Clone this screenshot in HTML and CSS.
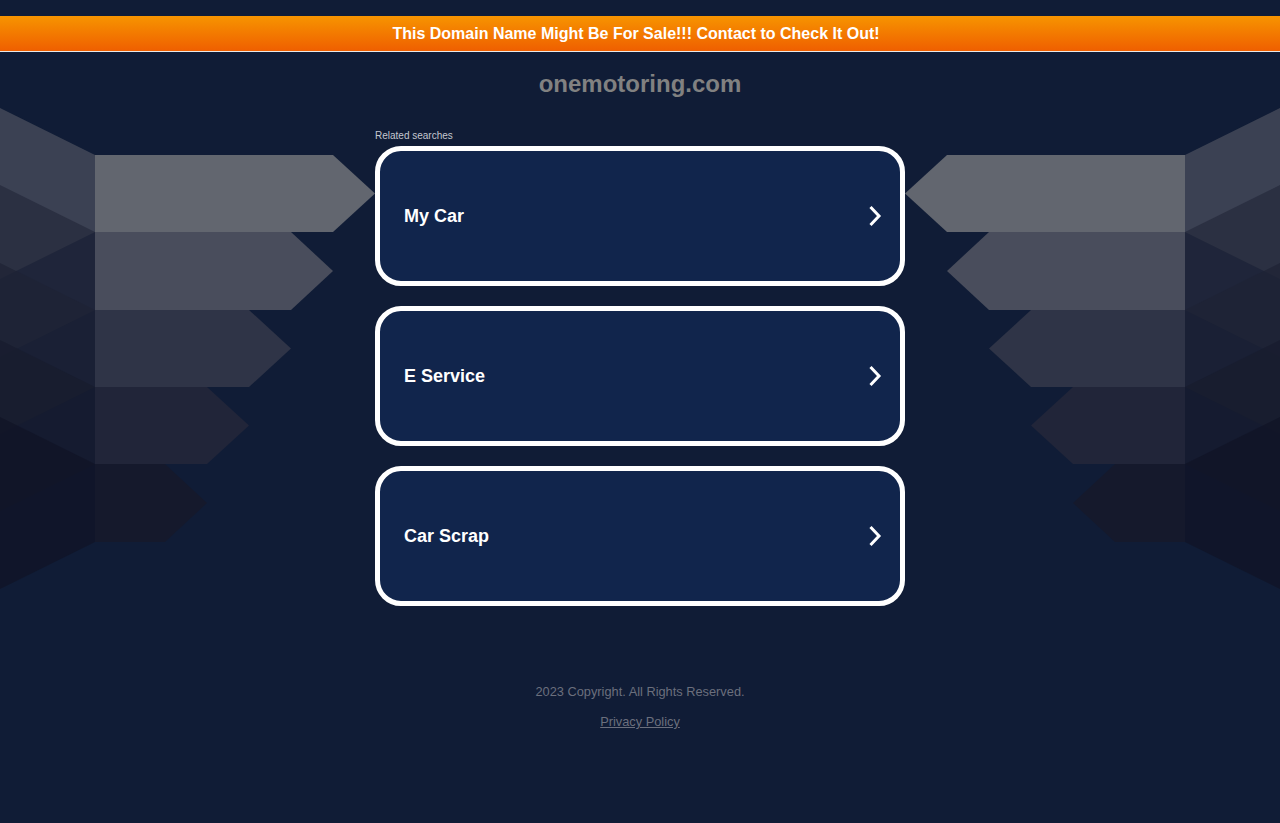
FILE: index.html
```html
<!DOCTYPE html>
<html lang="en">
<head>
<meta charset="utf-8">
<title>onemotoring.com</title>
<link rel="stylesheet" href="styles.css">
</head>
<body>
<div class="banner">This Domain Name Might Be For Sale!!! Contact to Check It Out!</div>
<h1 class="domain">onemotoring.com</h1>
<div class="stage">
  <div class="wing">
    <svg class="wing-svg" width="375" height="490" viewBox="0 0 375 490">
      <g class="faces">
        <polygon points="0,8 95,55 95,132 0,179" fill="#4c505e"/>
        <polygon points="0,85 95,132 95,210 0,257" fill="#262a3b"/>
        <polygon points="0,163 95,210 95,287 0,334" fill="#1f2334"/>
        <polygon points="0,240 95,287 95,364 0,411" fill="#181c2e"/>
        <polygon points="0,317 95,364 95,442 0,489" fill="#111426"/>
      </g>
      <polygon points="95,55 333,55 375,93.5 333,132 95,132" fill="#62666f"/>
      <polygon points="95,132 291,132 333,171 291,210 95,210" fill="#494d5c"/>
      <polygon points="95,210 249,210 291,248.5 249,287 95,287" fill="#2f3447"/>
      <polygon points="95,287 207,287 249,325.5 207,364 95,364" fill="#212539"/>
      <polygon points="95,364 165,364 207,403 165,442 95,442" fill="#15192c"/>
    </svg>
  </div>
  <div class="center">
    <div class="related">Related searches</div>
    <a class="card" href="#"><span class="card-label">My Car</span><svg class="chev" width="14" height="22" viewBox="0 0 14 22"><polyline points="2.5,2 11,11 2.5,20" fill="none" stroke="#fff" stroke-width="3"/></svg></a>
    <a class="card" href="#"><span class="card-label">E Service</span><svg class="chev" width="14" height="22" viewBox="0 0 14 22"><polyline points="2.5,2 11,11 2.5,20" fill="none" stroke="#fff" stroke-width="3"/></svg></a>
    <a class="card" href="#"><span class="card-label">Car Scrap</span><svg class="chev" width="14" height="22" viewBox="0 0 14 22"><polyline points="2.5,2 11,11 2.5,20" fill="none" stroke="#fff" stroke-width="3"/></svg></a>
  </div>
  <div class="wing wing-right">
    <svg class="wing-svg" width="375" height="490" viewBox="0 0 375 490">
      <g class="faces">
        <polygon points="0,8 95,55 95,132 0,179" fill="#4c505e"/>
        <polygon points="0,85 95,132 95,210 0,257" fill="#262a3b"/>
        <polygon points="0,163 95,210 95,287 0,334" fill="#1f2334"/>
        <polygon points="0,240 95,287 95,364 0,411" fill="#181c2e"/>
        <polygon points="0,317 95,364 95,442 0,489" fill="#111426"/>
      </g>
      <polygon points="95,55 333,55 375,93.5 333,132 95,132" fill="#62666f"/>
      <polygon points="95,132 291,132 333,171 291,210 95,210" fill="#494d5c"/>
      <polygon points="95,210 249,210 291,248.5 249,287 95,287" fill="#2f3447"/>
      <polygon points="95,287 207,287 249,325.5 207,364 95,364" fill="#212539"/>
      <polygon points="95,364 165,364 207,403 165,442 95,442" fill="#15192c"/>
    </svg>
  </div>
</div>
<footer class="footer">
  <div class="copy">2023 Copyright. All Rights Reserved.</div>
  <a class="privacy" href="#">Privacy Policy</a>
</footer>
</body>
</html>
```

FILE: styles.css
```css
html, body {
  margin: 0;
  padding: 0;
}
body {
  background: #101c36;
  font-family: "Liberation Sans", Arial, sans-serif;
  min-height: 823px;
}
.banner {
  margin-top: 16px;
  height: 35px;
  line-height: 35px;
  padding-right: 8px;
  background: linear-gradient(#f79400, #ef5f00);
  border-bottom: 1px solid #e8e8e8;
  color: #fff;
  font-weight: bold;
  font-size: 16px;
  text-align: center;
}
.domain {
  margin: 18px 0 2px;
  height: 28px;
  line-height: 28px;
  font-size: 24px;
  font-weight: bold;
  color: #818181;
  text-align: center;
}
.stage {
  display: grid;
  grid-template-columns: 375px 530px 375px;
  align-items: start;
}
.wing {
  height: 490px;
}
.wing-svg {
  display: block;
}
.faces polygon {
  fill-opacity: 0.72;
}
.wing-right {
  transform: scaleX(-1);
}
.center {
  padding-top: 30px;
  display: flex;
  flex-direction: column;
  gap: 20px;
}
.related {
  font-size: 10px;
  line-height: 12px;
  color: #c4c7d0;
  margin-bottom: -16px;
}
.card {
  box-sizing: border-box;
  height: 140px;
  border: 5px solid #fff;
  border-radius: 26px;
  background: #11254c;
  display: flex;
  align-items: center;
  justify-content: space-between;
  padding: 0 18px 0 24px;
  text-decoration: none;
}
.card-label {
  color: #fff;
  font-size: 18px;
  font-weight: bold;
}
.chev {
  display: block;
}
.footer {
  margin-top: 78px;
  text-align: center;
  font-size: 12.8px;
  line-height: 15px;
  color: #6b6f7d;
}
.copy {
  margin-bottom: 15px;
}
.privacy {
  color: #6b6f7d;
  text-decoration: underline;
}
```
